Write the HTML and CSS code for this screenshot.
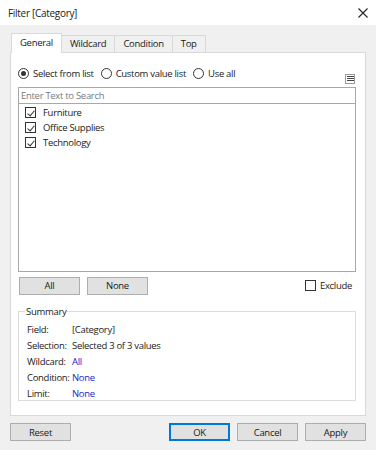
FILE: index.html
```html
<!DOCTYPE html>
<html lang="en">
<head>
    <meta charset="UTF-8">
    <title>Filter [Category]</title>
    <link rel="stylesheet" href="styles.css">
</head>
<body>
    <div class="titlebar">
        <span class="title">Filter [Category]</span>
        <svg class="close" width="10" height="10" viewBox="0 0 10 10"><path d="M0.5 0.5 L9.5 9.5 M9.5 0.5 L0.5 9.5" stroke="#222" stroke-width="1.1"/></svg>
    </div>

    <div class="dialog">
        <div class="tabs">
            <div class="tab active">General</div>
            <div class="tab">Wildcard</div>
            <div class="tab">Condition</div>
            <div class="tab">Top</div>
        </div>

        <div class="panel">
            <div class="mode-row">
                <label class="radio checked"><span class="dot"></span>Select from list</label>
                <label class="radio"><span class="dot"></span>Custom value list</label>
                <label class="radio"><span class="dot"></span>Use all</label>
            </div>
            <div class="menu-row">
                <span class="menu-btn">
                    <svg width="7" height="6" viewBox="0 0 7 6"><path d="M0 0.5H7M0 2.5H7M0 4.5H7" stroke="#444" stroke-width="1"/></svg>
                </span>
            </div>

            <div class="search">Enter Text to Search</div>
            <div class="list">
                <div class="item"><span class="check on"></span>Furniture</div>
                <div class="item"><span class="check on"></span>Office Supplies</div>
                <div class="item"><span class="check on"></span>Technology</div>
            </div>

            <div class="list-actions">
                <button class="btn">All</button>
                <button class="btn">None</button>
                <label class="exclude"><span class="check"></span>Exclude</label>
            </div>

            <fieldset class="summary">
                <legend>Summary</legend>
                <div class="row"><span class="key">Field:</span><span>[Category]</span></div>
                <div class="row"><span class="key">Selection:</span><span>Selected 3 of 3 values</span></div>
                <div class="row"><span class="key">Wildcard:</span><span class="link">All</span></div>
                <div class="row"><span class="key">Condition:</span><span class="link">None</span></div>
                <div class="row"><span class="key">Limit:</span><span class="link">None</span></div>
            </fieldset>
        </div>

        <div class="footer">
            <button class="btn">Reset</button>
            <div class="spacer"></div>
            <button class="btn default">OK</button>
            <button class="btn">Cancel</button>
            <button class="btn">Apply</button>
        </div>
    </div>
</body>
</html>
```

FILE: styles.css
```css
/* Dialog look */
body {
    margin: 0;
    width: 376px;
    height: 450px;
    background: #f0f0f0;
    font-family: 'Open Sans', 'Noto Sans', sans-serif;
    font-size: 9.5px;
    letter-spacing: -0.3px;
    color: #1a1a1a;
    overflow: hidden;
}

.titlebar {
    height: 25px;
    background: #fff;
    display: flex;
    align-items: center;
    justify-content: space-between;
    padding: 0 8px 0 8px;
}

.title {
    font-size: 10px;
}

.dialog {
    padding: 8px 10px 0 10px;
}

.tabs {
    display: flex;
    align-items: flex-end;
    height: 19px;
    padding-left: 1px;
}

.tab {
    height: 16px;
    line-height: 16px;
    padding: 0 8px;
    border: 1px solid #d9d9d9;
    border-bottom: none;
    border-left: none;
    background: #f0f0f0;
}

.tab.active {
    height: 19px;
    line-height: 18px;
    background: #fff;
    border-left: 1px solid #d9d9d9;
    padding: 0 8px;
    margin-bottom: -1px;
    position: relative;
}

.panel {
    background: #fff;
    border: 1px solid #d9d9d9;
    height: 364px;
    padding: 0 9px 0 7px;
    box-sizing: border-box;
}

.mode-row {
    display: flex;
    gap: 7px;
    padding-top: 14px;
    height: 13px;
    align-items: center;
}

.radio {
    display: flex;
    align-items: center;
}

.dot {
    width: 11px;
    height: 11px;
    border: 1px solid #333;
    border-radius: 50%;
    margin-right: 4px;
    box-sizing: border-box;
    position: relative;
}

.radio.checked .dot::after {
    content: "";
    position: absolute;
    left: 2px;
    top: 2px;
    width: 5px;
    height: 5px;
    border-radius: 50%;
    background: #333;
}

.menu-row {
    display: flex;
    justify-content: flex-end;
    height: 10px;
    margin-top: -6px;
    padding-right: 1px;
}

.menu-btn {
    width: 10px;
    height: 10px;
    border: 1px solid #9a9a9a;
    box-sizing: border-box;
    display: flex;
    align-items: center;
    justify-content: center;
}

.search {
    margin-top: 3px;
    height: 17px;
    line-height: 15px;
    border: 1px solid #a9a9a9;
    box-sizing: border-box;
    color: #7a7a7a;
    padding-left: 2px;
}

.list {
    height: 168px;
    border: 1px solid #a9a9a9;
    border-top: none;
    box-sizing: border-box;
    padding: 1px 0 0 6px;
}

.item {
    display: flex;
    align-items: center;
    height: 15px;
}

.check {
    width: 11px;
    height: 11px;
    border: 1px solid #333;
    box-sizing: border-box;
    margin-right: 7px;
    position: relative;
}

.check.on::after {
    content: "";
    position: absolute;
    left: 2.5px;
    top: 0.5px;
    width: 3px;
    height: 6px;
    border: solid #333;
    border-width: 0 1px 1px 0;
    transform: rotate(40deg);
}

.list-actions {
    display: flex;
    align-items: center;
    gap: 7px;
    margin-top: 5px;
    height: 17px;
    padding-left: 1px;
}

.btn {
    font-family: inherit;
    font-size: 9.5px;
    letter-spacing: -0.3px;
    color: #1a1a1a;
    width: 61px;
    height: 18px;
    padding: 0;
    background: #e1e1e1;
    border: 1px solid #adadad;
}

.exclude {
    margin-left: auto;
    display: flex;
    align-items: center;
    margin-right: 4px;
}

.exclude .check {
    margin-right: 4px;
}

.summary {
    margin: 11px 0 0 0;
    padding: 3px 0 0 8px;
    height: 96px;
    border: 1px solid #dcdcdc;
    box-sizing: border-box;
}

.summary legend {
    padding: 0 1px;
    margin-left: -2px;
}

.row {
    display: flex;
    height: 16px;
    align-items: center;
}

.key {
    width: 45px;
}

.link {
    color: #2323c8;
}

.footer {
    display: flex;
    gap: 7px;
    margin-top: 7px;
}

.spacer {
    flex: 1;
}

.btn.default {
    border: 1px solid #0078d7;
    box-shadow: inset 0 0 0 1px #0078d7;
}
```
